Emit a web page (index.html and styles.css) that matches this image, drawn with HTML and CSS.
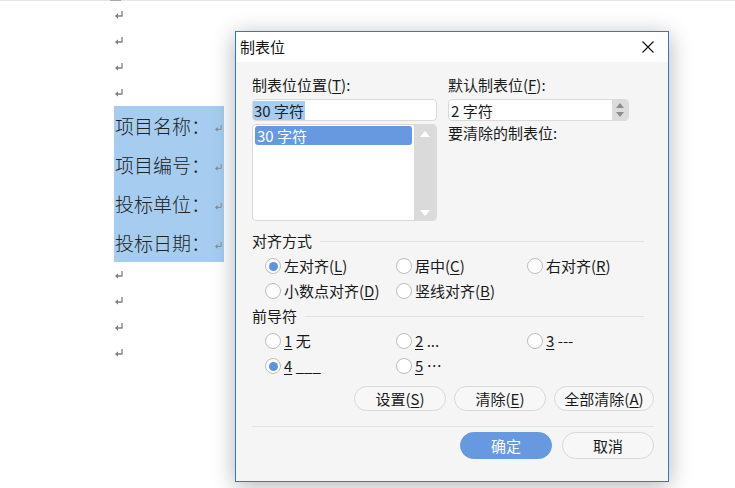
FILE: index.html
```html
<!DOCTYPE html>
<html lang="zh-CN">
<head>
<meta charset="utf-8">
<title>制表位</title>
<link rel="stylesheet" href="styles.css">
</head>
<body>
<div class="page">
  <div class="topline"><span class="topmark"></span></div>
  <div class="doc">
    <div class="para"><svg class="ret" width="8" height="8" viewBox="0 0 8 8"><path d="M7 0V5H2" fill="none" stroke="#808080" stroke-width="1.3"/><path d="M0 5L3 2.2V7.8Z" fill="#808080"/></svg></div>
    <div class="para"><svg class="ret" width="8" height="8" viewBox="0 0 8 8"><path d="M7 0V5H2" fill="none" stroke="#808080" stroke-width="1.3"/><path d="M0 5L3 2.2V7.8Z" fill="#808080"/></svg></div>
    <div class="para"><svg class="ret" width="8" height="8" viewBox="0 0 8 8"><path d="M7 0V5H2" fill="none" stroke="#808080" stroke-width="1.3"/><path d="M0 5L3 2.2V7.8Z" fill="#808080"/></svg></div>
    <div class="para"><svg class="ret" width="8" height="8" viewBox="0 0 8 8"><path d="M7 0V5H2" fill="none" stroke="#808080" stroke-width="1.3"/><path d="M0 5L3 2.2V7.8Z" fill="#808080"/></svg></div>
    <div class="selection">
      <div class="line">项目名称：<svg class="ret small" width="7" height="7" viewBox="0 0 8 8"><path d="M7 0V5H2" fill="none" stroke="#8a8a8a" stroke-width="1.1"/><path d="M0 5L3 2.4V7.6Z" fill="#8a8a8a"/></svg></div>
      <div class="line">项目编号：<svg class="ret small" width="7" height="7" viewBox="0 0 8 8"><path d="M7 0V5H2" fill="none" stroke="#8a8a8a" stroke-width="1.1"/><path d="M0 5L3 2.4V7.6Z" fill="#8a8a8a"/></svg></div>
      <div class="line">投标单位：<svg class="ret small" width="7" height="7" viewBox="0 0 8 8"><path d="M7 0V5H2" fill="none" stroke="#8a8a8a" stroke-width="1.1"/><path d="M0 5L3 2.4V7.6Z" fill="#8a8a8a"/></svg></div>
      <div class="line">投标日期：<svg class="ret small" width="7" height="7" viewBox="0 0 8 8"><path d="M7 0V5H2" fill="none" stroke="#8a8a8a" stroke-width="1.1"/><path d="M0 5L3 2.4V7.6Z" fill="#8a8a8a"/></svg></div>
    </div>
    <div class="para"><svg class="ret" width="8" height="8" viewBox="0 0 8 8"><path d="M7 0V5H2" fill="none" stroke="#808080" stroke-width="1.3"/><path d="M0 5L3 2.2V7.8Z" fill="#808080"/></svg></div>
    <div class="para"><svg class="ret" width="8" height="8" viewBox="0 0 8 8"><path d="M7 0V5H2" fill="none" stroke="#808080" stroke-width="1.3"/><path d="M0 5L3 2.2V7.8Z" fill="#808080"/></svg></div>
    <div class="para"><svg class="ret" width="8" height="8" viewBox="0 0 8 8"><path d="M7 0V5H2" fill="none" stroke="#808080" stroke-width="1.3"/><path d="M0 5L3 2.2V7.8Z" fill="#808080"/></svg></div>
    <div class="para"><svg class="ret" width="8" height="8" viewBox="0 0 8 8"><path d="M7 0V5H2" fill="none" stroke="#808080" stroke-width="1.3"/><path d="M0 5L3 2.2V7.8Z" fill="#808080"/></svg></div>
  </div>

  <div class="dialog">
    <div class="titlebar">
      <span class="title">制表位</span>
      <svg class="close" width="12" height="12" viewBox="0 0 12 12"><path d="M0.5 0.5L11.5 11.5M11.5 0.5L0.5 11.5" stroke="#111" stroke-width="1.1"/></svg>
    </div>
    <div class="body">
      <div class="top">
        <div class="col">
          <div class="label">制表位位置(<u>T</u>):</div>
          <div class="input"><span class="sel-text">30 字符</span></div>
          <div class="list">
            <div class="items"><div class="item">30 字符</div></div>
            <div class="scroll">
              <svg width="10" height="6" viewBox="0 0 10 6"><path d="M0 6L5 0L10 6Z" fill="#fff"/></svg>
              <svg width="10" height="6" viewBox="0 0 10 6"><path d="M0 0L5 6L10 0Z" fill="#fff"/></svg>
            </div>
          </div>
        </div>
        <div class="col">
          <div class="label">默认制表位(<u>F</u>):</div>
          <div class="input spin">
            <span class="spin-text">2 字符</span>
            <span class="spin-btns">
              <svg width="8" height="5" viewBox="0 0 8 5"><path d="M0 5L4 0L8 5Z" fill="#8c8c8c"/></svg>
              <svg width="8" height="5" viewBox="0 0 8 5"><path d="M0 0L4 5L8 0Z" fill="#8c8c8c"/></svg>
            </span>
          </div>
          <div class="label clear-label">要清除的制表位:</div>
        </div>
      </div>

      <div class="heading align-head">对齐方式</div>
      <div class="radios">
        <label class="radio"><span class="circle checked"></span><span class="txt">左对齐(<u>L</u>)</span></label>
        <label class="radio"><span class="circle"></span><span class="txt">居中(<u>C</u>)</span></label>
        <label class="radio"><span class="circle"></span><span class="txt">右对齐(<u>R</u>)</span></label>
        <label class="radio"><span class="circle"></span><span class="txt">小数点对齐(<u>D</u>)</span></label>
        <label class="radio"><span class="circle"></span><span class="txt">竖线对齐(<u>B</u>)</span></label>
      </div>

      <div class="heading leader-head">前导符</div>
      <div class="radios">
        <label class="radio"><span class="circle"></span><span class="txt"><u>1</u> 无</span></label>
        <label class="radio"><span class="circle"></span><span class="txt"><u>2</u> ...</span></label>
        <label class="radio"><span class="circle"></span><span class="txt"><u>3</u> ---</span></label>
        <label class="radio"><span class="circle checked"></span><span class="txt"><u>4</u> ___</span></label>
        <label class="radio"><span class="circle"></span><span class="txt"><u>5</u> …</span></label>
      </div>

      <div class="actions">
        <button class="btn w92">设置(<u>S</u>)</button>
        <button class="btn w92">清除(<u>E</u>)</button>
        <button class="btn w100">全部清除(<u>A</u>)</button>
      </div>
      <div class="sep"></div>
      <div class="footer">
        <button class="btn primary">确定</button>
        <button class="btn cancel">取消</button>
      </div>
    </div>
  </div>
</div>
</body>
</html>
```

FILE: styles.css
```css
* { box-sizing: border-box; }
html, body { margin: 0; padding: 0; background: #fff; }
body {
  font-family: "Noto Sans CJK SC", "Noto Sans", sans-serif;
  color: #1a1a1a;
  width: 735px;
  height: 488px;
  overflow: hidden;
}
.page { position: relative; width: 735px; height: 488px; }

.topline {
  height: 1px;
  background: #e6e6e6;
  margin-bottom: 1px;
}
.topmark {
  display: block;
  margin-left: 110px;
  width: 11px;
  height: 1px;
  background: #a9a9a9;
}

.doc { margin-left: 114px; }
.para {
  height: 26px;
  display: flex;
  align-items: center;
  padding-left: 1px;
}
.ret { display: block; }
.selection {
  width: 110px;
  background: #a6cdf0;
}
.line {
  height: 39px;
  display: flex;
  align-items: center;
  padding-left: 1px;
  font-size: 19px;
  color: #222;
  font-weight: 300;
}
.line .ret.small { margin-left: 5px; margin-top: 6px; }

/* dialog */
.dialog {
  position: absolute;
  left: 235px;
  top: 31px;
  width: 434px;
  height: 451px;
  border: 1px solid #2a7cc4;
  background: #f5f5f5;
  box-shadow: 0 4px 22px rgba(0,0,0,0.30);
  font-size: 15px;
}
.titlebar {
  height: 30px;
  background: #fff;
  display: flex;
  align-items: center;
  justify-content: space-between;
  padding: 0 14px 0 4px;
}
.title { font-size: 15px; line-height: 20px; color: #111; }
.close { display: block; }

.body { padding: 14px 14px 0 16px; }
.top {
  display: grid;
  grid-template-columns: 185px 181px;
  column-gap: 11px;
}
.label { height: 18px; line-height: 18px; margin-bottom: 5px; white-space: nowrap; }
.clear-label { margin-top: 3px; }
u { text-decoration: underline; text-underline-offset: 2px; text-decoration-thickness: 1px; }

.input {
  height: 22px;
  background: #fff;
  border: 1px solid #dadada;
  border-radius: 4px;
  display: flex;
  align-items: center;
  overflow: hidden;
}
.sel-text {
  background: #a6cdf0;
  line-height: 19px;
  padding: 0 1px;
  color: #222;
}
.spin { justify-content: space-between; }
.spin-text { padding-left: 2px; line-height: 19px; }
.spin-btns {
  width: 16px;
  height: 100%;
  background: #dcdcdc;
  border-radius: 0 3px 3px 0;
  display: flex;
  flex-direction: column;
  align-items: center;
  justify-content: center;
  gap: 4px;
}
.spin-btns svg { display: block; }

.list {
  margin-top: 3px;
  height: 97px;
  background: #fff;
  border: 1px solid #dadada;
  border-radius: 4px;
  display: flex;
  overflow: hidden;
}
.items { flex: 1; padding: 1px 2px 0 2px; }
.item {
  height: 19px;
  line-height: 19px;
  background: #6699e0;
  color: #fff;
  border-radius: 3px;
  padding-left: 2px;
}
.scroll {
  width: 22px;
  background: #dadada;
  display: flex;
  flex-direction: column;
  align-items: center;
  justify-content: space-between;
  padding: 6px 0 4px;
}
.scroll svg { display: block; }

.heading {
  display: flex;
  align-items: center;
  height: 18px;
  line-height: 18px;
  margin-right: 10px;
}
.heading::after {
  content: "";
  flex: 1;
  height: 1px;
  background: #e2e2e2;
  margin-left: 8px;
}
.align-head { margin-top: 11px; }
.leader-head { margin-top: 7px; }

.radios {
  display: grid;
  grid-template-columns: 131px 131px 131px;
  grid-auto-rows: 18px;
  row-gap: 7px;
  padding-left: 13px;
  margin-top: 7px;
}
.radio {
  display: flex;
  align-items: center;
  height: 18px;
  line-height: 18px;
  white-space: nowrap;
  gap: 3px;
}
.txt { display: block; white-space: pre; }
.circle {
  width: 16px;
  height: 16px;
  border-radius: 50%;
  border: 1.3px solid #bdbdbd;
  background: #fff;
  display: flex;
  align-items: center;
  justify-content: center;
  flex: none;
}
.circle.checked::after {
  content: "";
  width: 9px;
  height: 9px;
  border-radius: 50%;
  background: #5f93e2;
}

.actions {
  display: flex;
  justify-content: flex-end;
  gap: 8px;
  margin-top: 11px;
}
.btn {
  font-family: inherit;
  font-size: 15px;
  color: #1a1a1a;
  height: 25px;
  line-height: 20px;
  padding: 0;
  border: 1px solid #d8d8d8;
  border-radius: 13px;
  background: #f7f7f7;
}
.w92 { width: 92px; }
.w100 { width: 100px; }
.sep {
  margin-top: 15px;
  height: 1px;
  background: #e2e2e2;
}
.footer {
  display: flex;
  justify-content: flex-end;
  gap: 10px;
  margin-top: 5px;
}
.footer .btn { width: 92px; height: 27px; border-radius: 14px; }
.btn.primary { background: #6699e0; border-color: #6699e0; color: #fff; }
.btn.cancel { background: #f7f7f7; }
```
